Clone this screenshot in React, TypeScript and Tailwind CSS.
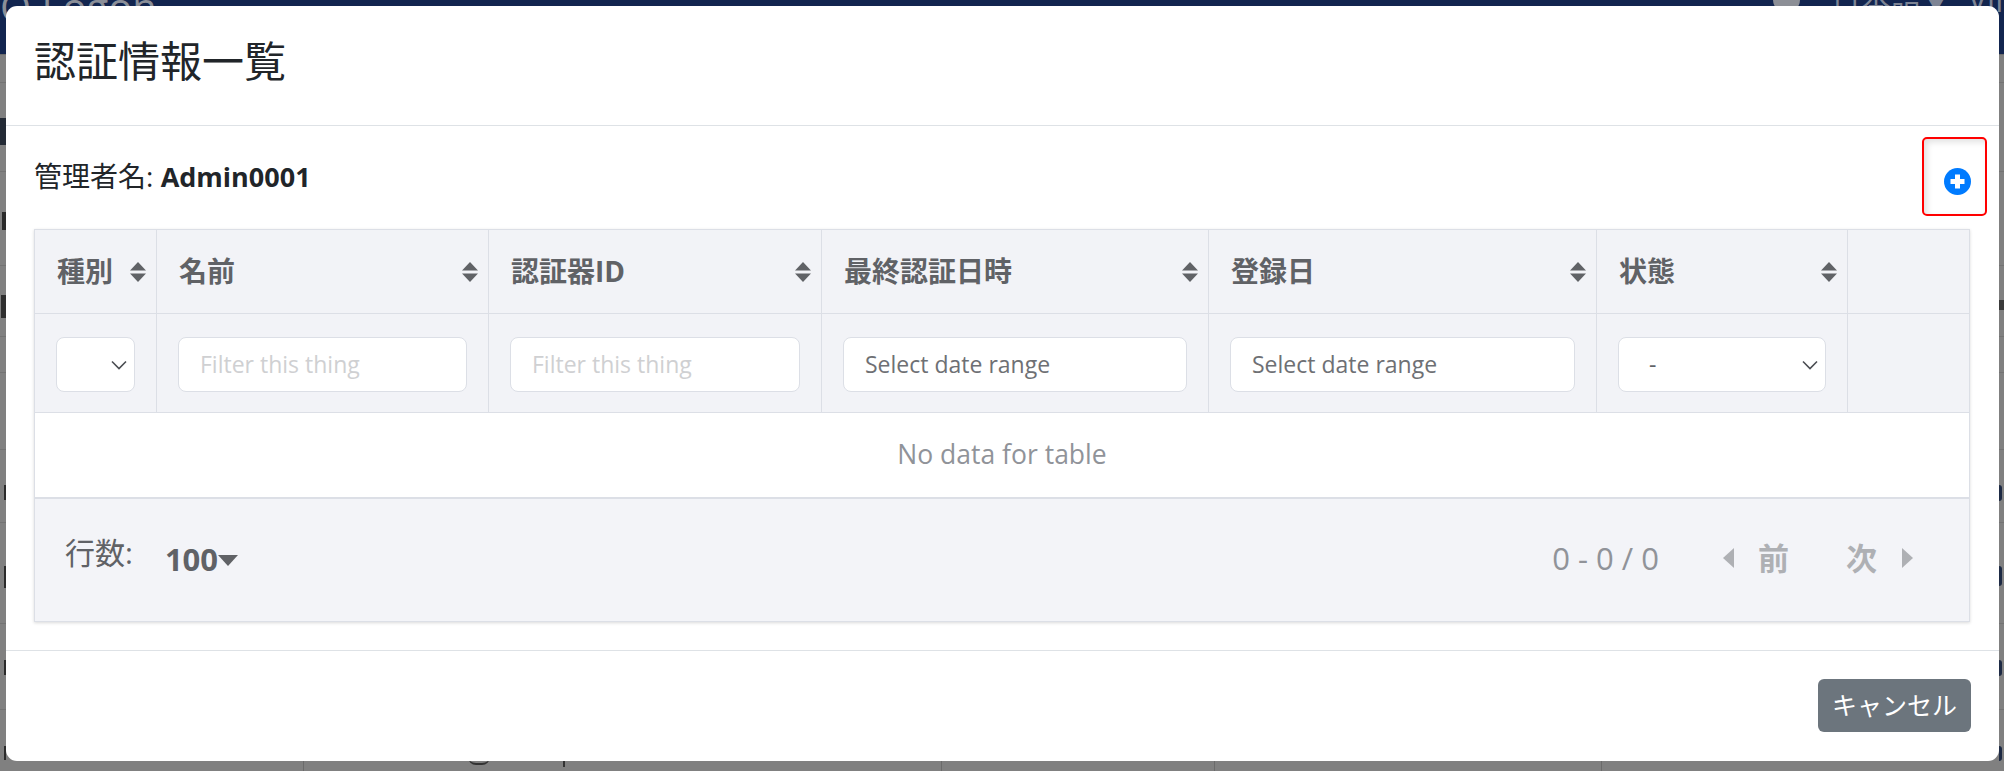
import React from "react";

const font = "font-['Open_Sans','Noto_Sans_CJK_JP',sans-serif]";

function Sort() {
  return (
    <svg width="16" height="20" viewBox="0 0 16 20" className="shrink-0 fill-[#606266]">
      <path d="M8 0L16 8.5H0Z" />
      <path d="M0 11.5H16L8 20Z" />
    </svg>
  );
}

function Chevron({ className }: { className: string }) {
  return (
    <svg width="16" height="10" viewBox="0 0 16 10" className={className} fill="none" stroke="#4a4d52" strokeWidth="1.6">
      <path d="M1 1.5L8 8.5L15 1.5" />
    </svg>
  );
}

function HeadCell({ label, width, last }: { label: string; width: string; last?: boolean }) {
  return (
    <div className={`${width} h-full flex items-center justify-between pl-[22px] pr-[10px] ${last ? "" : "border-r border-[#dcdfe6]"}`}>
      <span className="text-[28px] font-bold text-[#606266] leading-none whitespace-nowrap -mt-[2px]">{label}</span>
      <Sort />
    </div>
  );
}

function FilterCell({ width, children }: { width: string; children?: React.ReactNode }) {
  return <div className={`${width} h-full flex items-center pt-[2px] px-[21px] border-r border-[#dcdfe6]`}>{children}</div>;
}

function TextFilter({ placeholder, dark }: { placeholder: string; dark?: boolean }) {
  return (
    <input
      readOnly
      placeholder={placeholder}
      className={`w-full h-[55px] rounded-[8px] border border-[#dcdfe6] bg-white pl-[21px] pr-2 text-[23px] outline-none ${font} ${
        dark ? "placeholder:text-[#6e7074]" : "placeholder:text-[#cfd0d2]"
      }`}
    />
  );
}

function SelectFilter({ value }: { value?: string }) {
  return (
    <div className="relative w-full h-[55px]">
      <select className={`appearance-none w-full h-full rounded-[8px] border border-[#dcdfe6] bg-white pl-[30px] text-[23px] text-[#606266] outline-none ${font}`}>
        <option>{value ?? ""}</option>
      </select>
      <Chevron className="absolute right-[8px] top-[23px] pointer-events-none" />
    </div>
  );
}

export default function App() {
  return (
    <div className={`relative w-[2004px] h-[771px] overflow-hidden bg-[#808080] ${font}`}>
      {/* page dimmed behind the dialog */}
      <div className="h-[55px] bg-[#12254f] border-b border-[#6d6d6d]" />
      <span className="absolute left-0 -top-[23px] text-[40px] text-[#8b8f98] whitespace-nowrap">O Logon</span>
      <span className="absolute left-[1773px] -top-[14px] w-[27px] h-[27px] rounded-full bg-[#8c8f96]" />
      <span className="absolute left-[1831px] -top-[24px] text-[30px] text-[#7d8494] whitespace-nowrap">日本語▼</span>
      <span className="absolute left-[1968px] -top-[24px] text-[32px] text-[#7d8494] whitespace-nowrap">Vilo</span>
      <span className="absolute left-0 top-[82px] w-full h-px bg-[#737373]" />
      <span className="absolute left-0 top-[171px] w-full h-px bg-[#737373]" />
      <span className="absolute left-0 top-[265px] w-full h-px bg-[#737373]" />
      <span className="absolute left-0 top-[336px] w-full h-px bg-[#737373]" />
      <span className="absolute left-0 top-[372px] w-full h-px bg-[#737373]" />
      <span className="absolute left-0 top-[449px] w-full h-px bg-[#737373]" />
      <span className="absolute left-0 top-[522px] w-full h-px bg-[#737373]" />
      <span className="absolute left-0 top-[623px] w-full h-px bg-[#737373]" />
      <span className="absolute left-0 top-[709px] w-full h-px bg-[#737373]" />
      <span className="absolute left-0 top-[118px] w-[6px] h-[27px] bg-[#232a35]" />
      <span className="absolute left-[2px] top-[212px] w-[4px] h-[18px] bg-[#2a2a2a]" />
      <span className="absolute left-[1px] top-[295px] w-[5px] h-[23px] bg-[#2f2f2f]" />
      <span className="absolute left-[4px] top-[485px] w-[2px] h-[15px] bg-[#2b2b2b]" />
      <span className="absolute left-[4px] top-[566px] w-[2px] h-[22px] bg-[#2b2b2b]" />
      <span className="absolute left-[4px] top-[660px] w-[2px] h-[15px] bg-[#2b2b2b]" />
      <span className="absolute left-[4px] top-[746px] w-[2px] h-[14px] bg-[#2b2b2b]" />
      <span className="absolute left-[1999px] top-[485px] w-[3px] h-[16px] rounded-r-full bg-[#1d2a44]" />
      <span className="absolute left-[1999px] top-[566px] w-[3px] h-[20px] rounded-r-full bg-[#1d2a44]" />
      <span className="absolute left-[1999px] top-[660px] w-[3px] h-[16px] rounded-r-full bg-[#1d2a44]" />
      <span className="absolute left-[1999px] top-[746px] w-[3px] h-[15px] rounded-r-full bg-[#1d2a44]" />
      <span className="absolute left-[1999px] top-[300px] w-[5px] h-[10px] bg-[#3a3a3a]" />
      <span className="absolute left-[303px] top-[761px] w-px h-[10px] bg-[#6b6b6b]" />
      <span className="absolute left-[941px] top-[761px] w-px h-[10px] bg-[#6b6b6b]" />
      <span className="absolute left-[1214px] top-[761px] w-px h-[10px] bg-[#6b6b6b]" />
      <span className="absolute left-[1601px] top-[761px] w-px h-[10px] bg-[#6b6b6b]" />
      <span className="absolute left-[468px] top-[757px] w-[22px] h-[8px] rounded-b-full border-b-2 border-[#333]" />
      <span className="absolute left-[563px] top-[761px] w-[2px] h-[6px] bg-[#333]" />

      {/* dialog */}
      <div className="absolute left-[6px] top-[6px] w-[1993px] h-[755px] bg-white rounded-[11px] flex flex-col text-[#212529]">
        <div className="h-[120px] shrink-0 border-b border-[#dee2e6] pl-[28px] pt-[26px]">
          <h4 className="text-[42px] leading-[58px] font-normal m-0">認証情報一覧</h4>
        </div>

        <div className="h-[524px] shrink-0 pl-[28px] pr-[28px] relative">
          <div className="h-[103px] flex items-start justify-between">
            <p className="text-[28px] leading-[36px] mt-[32px] whitespace-nowrap">
              管理者名: <span className="font-bold text-[27px]">Admin0001</span>
            </p>
          </div>

          <div className="absolute right-[12px] top-[11px] w-[65px] h-[79px] rounded-[5px] border-2 border-[#ff0000] shadow-[inset_3px_3px_6px_rgba(0,0,0,0.12)] flex items-center justify-center">
            <svg width="27" height="27" viewBox="0 0 27 27" className="ml-[6px] mt-[10px]">
              <circle cx="13.5" cy="13.5" r="13.5" fill="#007bff" />
              <path d="M11 6.5H16V11H20.5V16H16V20.5H11V16H6.5V11H11Z" fill="#fff" />
            </svg>
          </div>

          <div className="w-[1936px] h-[393px] border border-[#dcdfe6] shadow-[0_1px_3px_rgba(0,0,0,0.15)] flex flex-col">
            <div className="h-[84px] shrink-0 flex bg-[#f2f3f7] border-b border-[#dcdfe6]">
              <HeadCell label="種別" width="w-[122px]" />
              <HeadCell label="名前" width="w-[332px]" />
              <HeadCell label="認証器ID" width="w-[333px]" />
              <HeadCell label="最終認証日時" width="w-[387px]" />
              <HeadCell label="登録日" width="w-[388px]" />
              <HeadCell label="状態" width="w-[251px]" />
              <div className="flex-1" />
            </div>
            <div className="h-[99px] shrink-0 flex bg-[#f2f3f7] border-b border-[#dcdfe6]">
              <FilterCell width="w-[122px]">
                <SelectFilter />
              </FilterCell>
              <FilterCell width="w-[332px]">
                <TextFilter placeholder="Filter this thing" />
              </FilterCell>
              <FilterCell width="w-[333px]">
                <TextFilter placeholder="Filter this thing" />
              </FilterCell>
              <FilterCell width="w-[387px]">
                <TextFilter placeholder="Select date range" dark />
              </FilterCell>
              <FilterCell width="w-[388px]">
                <TextFilter placeholder="Select date range" dark />
              </FilterCell>
              <FilterCell width="w-[251px]">
                <SelectFilter value="-" />
              </FilterCell>
              <div className="flex-1" />
            </div>
            <div className="h-[86px] shrink-0 flex items-center justify-center bg-white border-b-2 border-[#dcdfe6] text-[26.5px] text-[#909399]">
              No data for table
            </div>
            <div className="flex-1 bg-[#f3f4f8] flex items-center justify-between pl-[30px] pr-[56px]">
              <div className="flex items-center -mt-[2px]">
                <span className="text-[30px] text-[#606266] leading-none -mt-[12px]">行数:</span>
                <span className="ml-[32px] text-[31px] font-bold text-[#606266] leading-none">100</span>
                <svg width="20" height="14" viewBox="0 0 20 14" className="fill-[#606266] mt-[6px]">
                  <path d="M0 0H20L10 11Z" />
                </svg>
              </div>
              <div className="flex items-center -mt-[4px] text-[#aeb0b4]">
                <span className="text-[31px] text-[#909399] leading-none">0 - 0 / 0</span>
                <svg width="12" height="20" viewBox="0 0 12 20" className="fill-[#aeb0b4] ml-[64px]">
                  <path d="M11 0V20L0 10Z" />
                </svg>
                <span className="ml-[23px] text-[31px] font-bold leading-none">前</span>
                <span className="ml-[57px] text-[31px] font-bold leading-none">次</span>
                <svg width="12" height="20" viewBox="0 0 12 20" className="fill-[#aeb0b4] ml-[24px]">
                  <path d="M1 0V20L12 10Z" />
                </svg>
              </div>
            </div>
          </div>
        </div>

        <div className="flex-1 border-t border-[#dee2e6] flex items-start justify-end pr-[28px] pt-[28px]">
          <button className="h-[53px] w-[153px] rounded-[6px] bg-[#6c757d] text-white text-[25px] leading-none whitespace-nowrap">
            キャンセル
          </button>
        </div>
      </div>
    </div>
  );
}
